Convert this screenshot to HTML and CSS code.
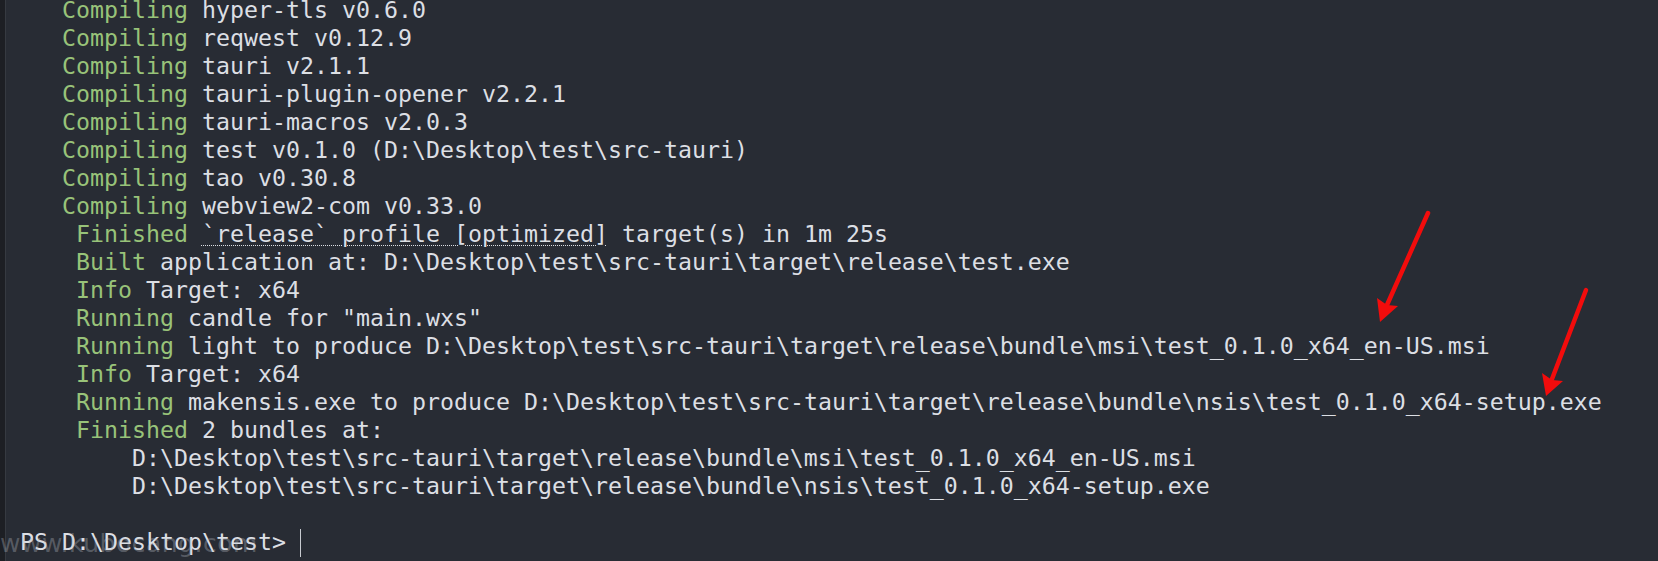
FILE: index.html
```html
<!DOCTYPE html>
<html lang="en">
<head>
<meta charset="utf-8">
<title>Terminal</title>
<link rel="stylesheet" href="styles.css">
</head>
<body>
<div class="strip"></div>
<main class="term">
<div class="line">   <span class="g">Compiling</span> hyper-tls v0.6.0</div>
<div class="line">   <span class="g">Compiling</span> reqwest v0.12.9</div>
<div class="line">   <span class="g">Compiling</span> tauri v2.1.1</div>
<div class="line">   <span class="g">Compiling</span> tauri-plugin-opener v2.2.1</div>
<div class="line">   <span class="g">Compiling</span> tauri-macros v2.0.3</div>
<div class="line">   <span class="g">Compiling</span> test v0.1.0 (D:\Desktop\test\src-tauri)</div>
<div class="line">   <span class="g">Compiling</span> tao v0.30.8</div>
<div class="line">   <span class="g">Compiling</span> webview2-com v0.33.0</div>
<div class="line">    <span class="g">Finished</span> <span class="link">`release` profile [optimized]</span> target(s) in 1m 25s</div>
<div class="line">    <span class="g">Built</span> application at: D:\Desktop\test\src-tauri\target\release\test.exe</div>
<div class="line">    <span class="g">Info</span> Target: x64</div>
<div class="line">    <span class="g">Running</span> candle for "main.wxs"</div>
<div class="line">    <span class="g">Running</span> light to produce D:\Desktop\test\src-tauri\target\release\bundle\msi\test_0.1.0_x64_en-US.msi</div>
<div class="line">    <span class="g">Info</span> Target: x64</div>
<div class="line">    <span class="g">Running</span> makensis.exe to produce D:\Desktop\test\src-tauri\target\release\bundle\nsis\test_0.1.0_x64-setup.exe</div>
<div class="line">    <span class="g">Finished</span> 2 bundles at:</div>
<div class="line">        D:\Desktop\test\src-tauri\target\release\bundle\msi\test_0.1.0_x64_en-US.msi</div>
<div class="line">        D:\Desktop\test\src-tauri\target\release\bundle\nsis\test_0.1.0_x64-setup.exe</div>
<div class="line"> </div>
<div class="line">PS D:\Desktop\test&gt; <span class="cursor"></span></div>
</main>
<div class="watermark">www.kubocang.com</div>
<svg class="arrows" width="1658" height="561" viewBox="0 0 1658 561" xmlns="http://www.w3.org/2000/svg">
  <g stroke="#f20c0c" stroke-width="4.5" stroke-linecap="round" fill="none">
    <line x1="1428" y1="213" x2="1387" y2="305"/>
    <line x1="1586" y1="290" x2="1552" y2="379"/>
  </g>
  <g fill="#f20c0c">
    <polygon points="1380,322 1377,298 1387,305 1398,306"/>
    <polygon points="1546,396 1542,373 1552,380 1563,381"/>
  </g>
</svg>
</body>
</html>
```
FILE: styles.css
```css
html, body {
  margin: 0;
  padding: 0;
}
body {
  background: #282c34;
  width: 1658px;
  height: 561px;
  overflow: hidden;
  display: flex;
  align-items: flex-start;
  position: relative;
}
.strip {
  width: 5px;
  height: 561px;
  flex: none;
  background: #1d1f24;
  border-right: 1px solid #363a41;
}
.term {
  padding-left: 14px;
  margin-top: -4px;
  font-family: "DejaVu Sans Mono", "Liberation Mono", monospace;
  font-size: 23.25px;
  line-height: 28px;
  color: #dcdfe4;
}
.line {
  height: 28px;
  white-space: pre;
}
.g {
  color: #98c379;
}
.link {
  text-decoration: underline dotted;
  text-decoration-thickness: 1px;
  text-underline-offset: 3px;
}
.cursor {
  display: inline-block;
  width: 1px;
  height: 28px;
  background: #c8cbd0;
  vertical-align: top;
  margin-top: 1px;
}
.watermark {
  position: absolute;
  left: 0;
  top: 530px;
  font-family: "DejaVu Sans", sans-serif;
  font-size: 25px;
  line-height: 28px;
  color: rgba(190, 194, 200, 0.32);
  letter-spacing: 0.5px;
}
.arrows {
  position: absolute;
  left: 0;
  top: 0;
  pointer-events: none;
}
```
